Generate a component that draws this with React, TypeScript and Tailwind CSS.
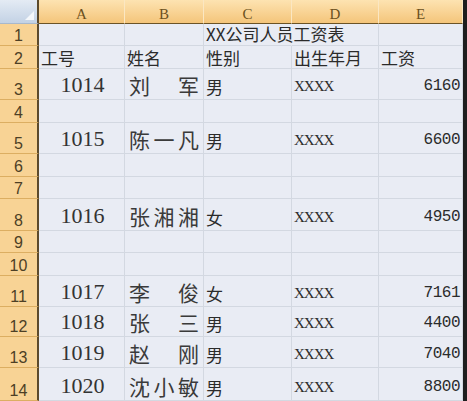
const serif = "font-['Liberation_Serif','Noto_Sans_CJK_SC',serif]"
const cjk = "font-['Noto_Sans_CJK_SC',sans-serif]"
const mono = "font-['Liberation_Mono','Noto_Sans_CJK_SC',monospace]"

type Row = {
  n: number
  id?: string
  name?: string[]
  sex?: string
  birth?: string
  pay?: string
}

const rows: Row[] = [
  { n: 1 },
  { n: 2 },
  { n: 3, id: "1014", name: ["刘", "军"], sex: "男", birth: "XXXX", pay: "6160" },
  { n: 4 },
  { n: 5, id: "1015", name: ["陈", "一", "凡"], sex: "男", birth: "XXXX", pay: "6600" },
  { n: 6 },
  { n: 7 },
  { n: 8, id: "1016", name: ["张", "湘", "湘"], sex: "女", birth: "XXXX", pay: "4950" },
  { n: 9 },
  { n: 10 },
  { n: 11, id: "1017", name: ["李", "俊"], sex: "女", birth: "XXXX", pay: "7161" },
  { n: 12, id: "1018", name: ["张", "三"], sex: "男", birth: "XXXX", pay: "4400" },
  { n: 13, id: "1019", name: ["赵", "刚"], sex: "男", birth: "XXXX", pay: "7040" },
  { n: 14, id: "1020", name: ["沈", "小", "敏"], sex: "男", birth: "XXXX", pay: "8800" },
]

const cell = "border-r border-b border-[#d3d8e1] bg-[#e9ecf4] flex items-end overflow-visible whitespace-nowrap text-[#2b2b2b]"
const colHead =
  "border-r border-[#fbe7c2] border-b border-b-[#6b5326] bg-gradient-to-b from-[#fde3b1] to-[#f4c57a] flex items-center justify-center pt-[6px] text-[15px] leading-none text-[#6b5020] " +
  serif
const rowHead =
  "border-r-2 border-r-[#5c4a2c] border-b border-b-[#dcae62] bg-[#f8d395] flex items-end justify-center pb-[1px] text-[16px] leading-none text-[#4d3f25] font-['Liberation_Sans',sans-serif]"

export default function App() {
  return (
    <div className="w-[467px] h-[401px] overflow-hidden bg-[#1e1e1e]">
      <div className="grid grid-cols-[39px_86px_79px_88px_87px_84px_4px] grid-rows-[24px_22px_23px_31px_23px_31px_23px_22px_32px_22px_23px_31px_30px_31px_33px]">
        {/* column header */}
        <div className="relative border-r-2 border-r-[#5c4a2c] border-b border-b-[#a8b8cc] bg-gradient-to-b from-[#e4ebf4] to-[#c3d2e5]">
          <div className="absolute right-[3px] bottom-[3px] w-0 h-0 border-l-[9px] border-l-transparent border-b-[9px] border-b-[#f4f7fb]" />
        </div>
        {["A", "B", "C", "D", "E"].map((c) => (
          <div key={c} className={colHead}>
            {c}
          </div>
        ))}
        <div className="bg-[#1e1e1e]" />

        {rows.map((r) => (
          <RowCells key={r.n} r={r} />
        ))}
      </div>
    </div>
  )
}

function RowCells({ r }: { r: Row }) {
  if (r.n === 1) {
    return (
      <>
        <div className={rowHead}>1</div>
        <div className={cell} />
        <div className={cell} />
        <div className={cell + " border-r-transparent relative z-10 pl-[2px] pb-[3px] text-[17px] leading-[16px] " + cjk}>
          XX公司人员工资表
        </div>
        <div className={cell} />
        <div className={cell} />
        <div className="bg-[#1e1e1e]" />
      </>
    )
  }
  if (r.n === 2) {
    const heads = ["工号", "姓名", "性别", "出生年月", "工资"]
    return (
      <>
        <div className={rowHead}>2</div>
        {heads.map((h) => (
          <div key={h} className={cell + " pl-[2px] pb-[2px] text-[17px] leading-none " + cjk}>
            {h}
          </div>
        ))}
        <div className="bg-[#1e1e1e]" />
      </>
    )
  }
  return (
    <>
      <div className={rowHead}>{r.n}</div>
      <div className={cell + " justify-center pb-[3px] text-[22px] leading-none pl-[2px] text-[#333] " + serif}>{r.id}</div>
      <div className={cell + " justify-between px-[4px] pb-[3px] text-[21px] leading-none text-[#3a3a3a] " + cjk}>
        {r.name?.map((ch, i) => (
          <span key={i}>{ch}</span>
        ))}
      </div>
      <div className={cell + " pl-[2px] pb-[4px] text-[17px] leading-none " + cjk}>{r.sex}</div>
      <div className={cell + " pl-[2px] pb-[5px] text-[15px] tracking-[-1px] leading-none text-[#1e1e1e] " + serif}>{r.birth}</div>
      <div className={cell + " justify-end pr-[2px] pb-[5px] text-[16px] tracking-[-0.5px] leading-none text-[#1e1e1e] " + mono}>{r.pay}</div>
      <div className="bg-[#1e1e1e]" />
    </>
  )
}
